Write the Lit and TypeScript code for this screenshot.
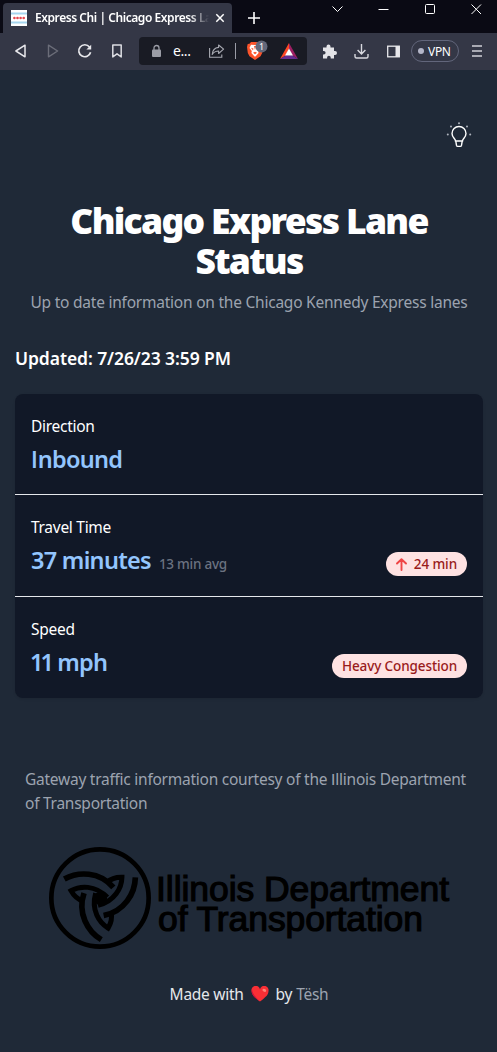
import { LitElement, html, svg, css } from "lit";
import { customElement, property } from "lit/decorators.js";

@customElement("browser-chrome")
class BrowserChrome extends LitElement {
  static styles = css`
    :host { display: block; font-family: "Noto Sans", "Open Sans", sans-serif; color: #fff; }
    svg { display: block; overflow: visible; }
    .tabs { height: 33px; background: #0a0a14; display: flex; padding-left: 3px; }
    .tab { margin-top: 3px; width: 229px; height: 30px; box-sizing: border-box; background: #343746; border-radius: 4px 4px 0 0; display: flex; align-items: center; padding: 0 7px 0 8px; }
    .title { margin-left: 8px; width: 175px; overflow: hidden; white-space: nowrap; font-size: 12px; font-weight: 600; letter-spacing: -0.44px; line-height: 18px;
      -webkit-mask-image: linear-gradient(to right, #000 155px, transparent 174px); mask-image: linear-gradient(to right, #000 155px, transparent 174px); }
    .close { margin-left: 6px; }
    .plus { margin: 12px 0 0 16px; }
    .window { margin-left: auto; display: flex; width: 165px; justify-content: space-between; padding: 4px 15px 0 0; box-sizing: border-box; }
    .bar { height: 37px; background: #343746; display: flex; align-items: center; padding: 0 0 1px 5px; box-sizing: border-box; }
    .ic { width: 32px; height: 32px; flex: none; display: grid; place-items: center; }
    .url { margin: 0 6px; width: 168px; height: 28px; background: #191b24; border-radius: 4px; display: flex; align-items: center; flex: none; box-sizing: border-box; padding-left: 13px; }
    .host { font-size: 14px; width: 18px; margin-left: 12px; line-height: 18px; letter-spacing: -0.4px; }
    .share { margin-left: 18px; }
    .sep { width: 1px; height: 16px; background: #9a9ca6; margin-left: 10px; }
    .shield { margin-left: 11px; }
    .bat { margin-left: 17px; }
    .vpn { margin-left: 2px; margin-right: 2px; width: 48px; height: 22px; box-sizing: border-box; border: 1px solid #62667b; border-radius: 11px; display: flex; align-items: center; font-size: 12px; padding-left: 6px; gap: 4px; letter-spacing: -0.3px; flex: none; }
    .dot { width: 6px; height: 6px; border-radius: 50%; background: #b4b6c8; flex: none; }
  `;

  render() {
    return html`
      <div class="tabs">
        <div class="tab">
          <svg width="16" height="16" viewBox="0 0 16 16"><rect width="16" height="16" fill="#fff"/><path d="M0 2.5h16v2H0zM0 11.5h16v2H0z" fill="#a5d5ee"/><g fill="#e5484f"><circle cx="3.4" cy="8" r="1.3"/><circle cx="6.5" cy="8" r="1.3"/><circle cx="9.6" cy="8" r="1.3"/><circle cx="12.7" cy="8" r="1.3"/></g></svg>
          <span class="title">Express Chi | Chicago Express Lane</span>
          <svg class="close" width="8" height="8" viewBox="0 0 8 8"><path d="M.3.3l7.4 7.4M7.7.3L.3 7.7" stroke="#fff" stroke-width="1.5"/></svg>
        </div>
        <svg class="plus" width="12" height="12" viewBox="0 0 12 12"><path d="M6 0v12M0 6h12" stroke="#fff" stroke-width="1.6"/></svg>
        <div class="window">
          <svg width="11" height="11" viewBox="0 0 11 11"><path d="M.5 2.5l5 5 5-5" fill="none" stroke="#fff"/></svg>
          <svg width="11" height="11" viewBox="0 0 11 11"><path d="M.5 5.5h10" stroke="#fff"/></svg>
          <svg width="11" height="11" viewBox="0 0 11 11"><rect x=".5" y=".5" width="9" height="9" rx="1" fill="none" stroke="#fff"/></svg>
          <svg width="11" height="11" viewBox="0 0 11 11"><path d="M.5.5l9.5 9.5M10 .5L.5 10" stroke="#fff"/></svg>
        </div>
      </div>
      <div class="bar">
        <div class="ic"><svg width="12" height="14" viewBox="0 0 12 14"><path d="M10 1.2v11.6L.9 7z" fill="none" stroke="#e8e8ec" stroke-width="1.5" stroke-linejoin="round"/></svg></div>
        <div class="ic"><svg width="12" height="14" viewBox="0 0 12 14"><path d="M1.500 1.200v11.600L10.600 7z" fill="none" stroke="#6b6d79" stroke-width="1.4" stroke-linejoin="round"/></svg></div>
        <div class="ic"><svg width="14" height="14" viewBox="0 0 14 14"><path d="M12.600 8.300A6 6 0 1 1 11.500 3" fill="none" stroke="#e8e8ec" stroke-width="1.7"/><path d="M13.200.8v4.800H8.400z" fill="#e8e8ec"/></svg></div>
        <div class="ic"><svg width="10" height="14" viewBox="0 0 10 14"><path d="M.8.9h8.400v12L5 9.800.8 12.900z" fill="none" stroke="#dcdde2" stroke-width="1.5" stroke-linejoin="round"/></svg></div>
        <div class="url">
          <svg width="9" height="12" viewBox="0 0 9 12"><rect y="4.500" width="9" height="7.500" rx="1" fill="#9b9da6"/><path d="M2 5V3a2.500 2.500 0 0 1 5 0v2" fill="none" stroke="#9b9da6" stroke-width="1.3"/></svg>
          <span class="host">e...</span>
          <svg class="share" width="16" height="14" viewBox="0 0 16 14"><g fill="none" stroke="#a8aab2" stroke-width="1.1"><path d="M.6 4v9.300h12.200v-2.800"/><path d="M9.600 1l5 4.200-5 4.300V7C6.500 7 4.700 8.200 3.200 10.500 3.500 6.600 6 3.700 9.600 3.400z" stroke-linejoin="round"/></g></svg>
          <span class="sep"></span>
          <svg class="shield" width="16" height="18" viewBox="0 0 16 18"><path d="M4 0h8l1.500 1.800 1.800.2.700 3-.8 6-1.700 3.300L8 18l-5.500-3.700L.8 11 0 5l.7-3 1.800-.2z" fill="#fb542b"/><path d="M8 3l4-.3L13.500 6l-2.300 3 .4 2L8.500 14.500h-1L4.400 11l.4-2L2.500 6 4 2.700z" fill="#fff"/><path d="M4 5.800l2.400.6L6 8.500zM12 5.800l-2.400.6.4 2.100zM6 10.700l2-1 2 1-2 1.600zM7 4h2L8 8z" fill="#fb542b"/><circle cx="14.500" cy="4.500" r="6" fill="#63687a"/><text x="14.500" y="7.700" font-size="9" text-anchor="middle" fill="#fff">1</text></svg>
          <svg class="bat" width="18" height="16" viewBox="0 0 18 16"><path d="M9 0L0 16l6-3.700L9 5.500z" fill="#ff4724"/><path d="M9 0l9 16-6-3.700L9 5.500z" fill="#9e1f63"/><path d="M0 16h18l-6-3.800H6z" fill="#662d91"/><path d="M9 5.500l4 7H5z" fill="#fff"/></svg>
        </div>
        <div class="ic"><svg width="15" height="15" viewBox="0 0 15 15"><path d="M1 3.500h3.500V2.500a2 2 0 0 1 4 0v1H12V7h1a2 2 0 0 1 0 4h-1v3.500H8.700v-1a1.800 1.800 0 0 0-3.600 0v1H1v-4h.8a1.800 1.800 0 0 0 0-3.600H1z" fill="#e4e4e8"/></svg></div>
        <div class="ic"><svg width="15" height="15" viewBox="0 0 15 15"><path d="M7.500 0v9.500M3.600 6l3.900 4 3.900-4M1 10v2.500Q1 14 2.500 14h10q1.500 0 1.500-1.500V10" fill="none" stroke="#d8d9df" stroke-width="1.400"/></svg></div>
        <div class="ic"><svg width="13" height="13" viewBox="0 0 13 13"><rect x=".7" y="1.200" width="11.600" height="10.600" fill="none" stroke="#e8e8ec" stroke-width="1.300"/><path d="M8.500 1h4v11h-4z" fill="#e8e8ec"/></svg></div>
        <div class="vpn"><span class="dot"></span>VPN</div>
        <div class="ic"><svg width="10" height="12" viewBox="0 0 10 12"><path d="M0 1h10M0 6h10M0 11h10" stroke="#d0d1d8" stroke-width="1.500"/></svg></div>
      </div>
    `;
  }
}

/** Sets a capital I without slab serifs and closes up a pair of ones. */
const glyphs = (text: string) =>
  text.split(/(I|11)/).map((part) =>
    part === "I" ? html`<span class="plain">I</span>` : part === "11" ? html`<span class="ones">11</span>` : part
  );

@customElement("stat-row")
class StatRow extends LitElement {
  @property() label = "";
  @property() value = "";
  @property() note = "";
  @property() badge = "";
  @property({ type: Boolean }) rising = false;

  static styles = css`
    :host { display: block; padding: 20px 16px 0; box-sizing: border-box; font-family: "Noto Sans", "Open Sans", sans-serif; }
    .label { font-size: 15.5px; line-height: 24px; color: #fff; letter-spacing: -0.28px; }
    .line { display: flex; align-items: baseline; height: 32px; margin-top: 5px; }
    .value { font-size: 23.5px; line-height: 32px; font-weight: 600; color: #93c5fd; letter-spacing: -0.72px; }
    .plain { font-family: Lato, sans-serif; letter-spacing: 0; }
    .ones { letter-spacing: -3px; margin-left: -1px; margin-right: 1px; }
    .note { font-size: 13.5px; font-weight: 500; color: #6b7280; margin-left: 8px; letter-spacing: -0.25px; }
    .badge { margin-left: auto; height: 24px; align-self: flex-end; background: #fee2e2; color: #991b1b; border-radius: 12px; padding: 0 10px; font-size: 13.5px; line-height: 24px; font-weight: 500; letter-spacing: -0.11px; display: flex; align-items: center; white-space: nowrap; }
    .badge svg { margin-right: 7px; }
  `;

  render() {
    return html`
      <div class="label">${this.label}</div>
      <div class="line">
        <span class="value">${glyphs(this.value)}</span>
        ${this.note ? html`<span class="note">${this.note}</span>` : ""}
        ${this.badge
          ? html`<span class="badge">${this.rising ? html`<svg width="11" height="13" viewBox="0 0 11 13"><path d="M5.500 12V1.500M1 5.500l4.500-4.300L10 5.500" fill="none" stroke="#ef4444" stroke-width="1.900" stroke-linecap="round" stroke-linejoin="round"/></svg>` : ""}${this.badge}</span>`
          : ""}
      </div>
    `;
  }
}

const blade = svg`
  <g fill="none" stroke="#000">
    <path d="M73 117C115 94 178 94 220 142" stroke-width="17"/>
    <path d="M130 184Q106 176 93 152C120 137 165 134 202 172" stroke-width="15"/>
  </g>
`;

@customElement("app-root")
class AppRoot extends LitElement {
  static styles = css`
    :host { display: block; height: 1052px; overflow: hidden; background: #1f2937; color: #fff; font-family: "Noto Sans", "Open Sans", sans-serif; }
    main { display: block; padding: 52px 14px 0 15px; }
    .theme { display: flex; justify-content: flex-end; padding-right: 11px; }
    svg { display: block; }
    h1 { margin: 52px 0 0; text-align: center; font-size: 35.5px; line-height: 40px; font-weight: 900; letter-spacing: -1.7px; }
    .sub { margin: 10px 0 0; text-align: center; font-size: 15.5px; line-height: 24px; color: #9ca3af; letter-spacing: -0.23px; white-space: nowrap; }
    .updated { margin: 30px 0 0; font-size: 17.5px; line-height: 28px; font-weight: 600; letter-spacing: -0.08px; }
    .card { margin-top: 22px; background: #111827; border-radius: 8px; box-shadow: 0 1px 3px rgba(0,0,0,.1); display: grid; grid-template-rows: 100px 102px 102px; }
    stat-row + stat-row { border-top: 1px solid #e5e7eb; }
    .credit { margin: 69px 0 0 10px; font-size: 15.5px; line-height: 24px; color: #9ca3af; letter-spacing: -0.25px; }
    .credit .row { display: block; white-space: nowrap; }
    .plain { font-family: Lato, sans-serif; letter-spacing: 0; }
    .logo { margin: 25px 0 0 25px; }
    .made { margin-top: 22px; display: flex; justify-content: center; align-items: center; font-size: 15.5px; line-height: 24px; color: #e5e7eb; letter-spacing: -0.27px; }
    .made svg { margin: 0 7px 0 7px; }
    .made a { color: #9ca3af; margin-left: 4px; }
  `;

  render() {
    return html`
      <browser-chrome></browser-chrome>
      <main>
        <div class="theme">
          <svg width="26" height="26" viewBox="0 0 26 26"><g fill="none" stroke="#fff" stroke-width="1.400"><path d="M9.500 19C9.500 16.500 6 15.500 6 11.500a7 7 0 0 1 14 0C20 15.500 16.500 16.500 16.500 19z"/><path d="M9.800 19.200l.7 4.200q.2 1 1.200 1h2.600q1 0 1.200-1l.7-4.200"/></g><g fill="#aeb4bd"><circle cx="13" cy="1.300" r="1"/><circle cx="5" cy="4.500" r="1"/><circle cx="21" cy="4.500" r="1"/><circle cx="1.800" cy="12.500" r="1"/><circle cx="24.200" cy="12.500" r="1"/></g></svg>
        </div>
        <h1>Chicago Express Lane<br />Status</h1>
        <p class="sub">Up to date information on the Chicago Kennedy Express lanes</p>
        <p class="updated">Updated: 7/26/23 3:59 PM</p>
        <div class="card">
          <stat-row label="Direction" value="Inbound"></stat-row>
          <stat-row label="Travel Time" value="37 minutes" note="13 min avg" badge="24 min" rising></stat-row>
          <stat-row label="Speed" value="11 mph" badge="Heavy Congestion"></stat-row>
        </div>
        <p class="credit"><span class="row">${glyphs("Gateway traffic information courtesy of the Illinois Department")}</span><span class="row">of Transportation</span></p>
        <svg class="logo" width="420" height="120" viewBox="0 0 420 120">
          <g transform="scale(.33333)">
            <circle cx="180" cy="174" r="146" fill="none" stroke="#000" stroke-width="14"/>
            <circle cx="181" cy="175" r="20" fill="#000"/>
            ${[0, 120, 240].map((a) => svg`<g transform="rotate(${a} 181 176)">${blade}</g>`)}
          </g>
          <g font-family="Liberation Sans, Arial, sans-serif" font-size="35.500" fill="#000" stroke="#000" stroke-width="1.200">
            <text x="116" y="60.500" textLength="293" lengthAdjust="spacing">Illinois Department</text>
            <text x="118" y="90.500" textLength="265" lengthAdjust="spacing">of Transportation</text>
          </g>
        </svg>
        <div class="made">Made with<svg width="18" height="16" viewBox="0 0 18 16"><path d="M9 15.500C3 11 .5 8.500.5 5A4.300 4.300 0 0 1 9 3.300 4.300 4.300 0 0 1 17.500 5C17.500 8.500 15 11 9 15.500z" fill="#f92f35"/><path d="M1 3.500C-.5 8 4 12.500 9 15.500 4.500 11 1.500 8 1 3.500z" fill="#c9103c"/><ellipse cx="13.300" cy="4.300" rx="2" ry="1.400" transform="rotate(30 13.300 4.300)" fill="#ff8378"/></svg>by<a>Tësh</a></div>
      </main>
    `;
  }
}
